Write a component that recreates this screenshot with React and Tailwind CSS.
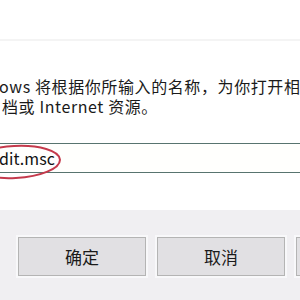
import React from "react";

export default function App() {
  const font = { fontFamily: '"Noto Sans CJK SC", "Noto Sans", sans-serif' };
  return (
    <div className="w-[300px] h-[300px] overflow-hidden bg-white relative" style={font}>
      <div className="h-[39px]" />
      <div className="h-[2px] bg-[#f4f4f4]" />
      <div className="pt-[35px] text-[16px] leading-[20px] text-[#1a1a1a]">
        <div className="whitespace-nowrap ml-[-1px] tracking-[0.6px]">ows 将根据你所输入的名称，为你打开相应的程序</div>
        <div className="whitespace-nowrap ml-[2px] tracking-[0.6px]">档或 Internet 资源。</div>
      </div>
      <div className="mt-[27px] h-[30px] border-y border-[#58746f] bg-[#fffffd] flex items-center">
        <span className="text-[16px] text-[#111] ml-[-1px] tracking-[0.1px] leading-none">dit.msc</span>
      </div>
      <div className="h-[37px] bg-white" />
      <div className="h-[90px] bg-[#f0eff2] flex gap-[11px] pl-[18px] pt-[27px]">
        <button className="w-[128px] h-[39px] bg-[#e1e0e3] border border-[#b4b4b4] text-[17px] text-[#1a1a1a] shrink-0 shadow-[0_0_0_2px_#f8f8fa]">确定</button>
        <button className="w-[128px] h-[39px] bg-[#e1e0e3] border border-[#b4b4b4] text-[17px] text-[#1a1a1a] shrink-0 shadow-[0_0_0_2px_#f8f8fa]">取消</button>
        <button className="w-[128px] h-[39px] bg-[#e1e0e3] border border-[#b4b4b4] text-[17px] text-[#1a1a1a] shrink-0 shadow-[0_0_0_2px_#f8f8fa]">浏览</button>
      </div>
      <svg className="absolute left-0 top-0 pointer-events-none" width="300" height="300">
        <ellipse cx="15" cy="162" rx="45" ry="16" fill="none" stroke="#c43a4c" strokeWidth="2" transform="rotate(-3 15 162)" />
      </svg>
    </div>
  );
}
